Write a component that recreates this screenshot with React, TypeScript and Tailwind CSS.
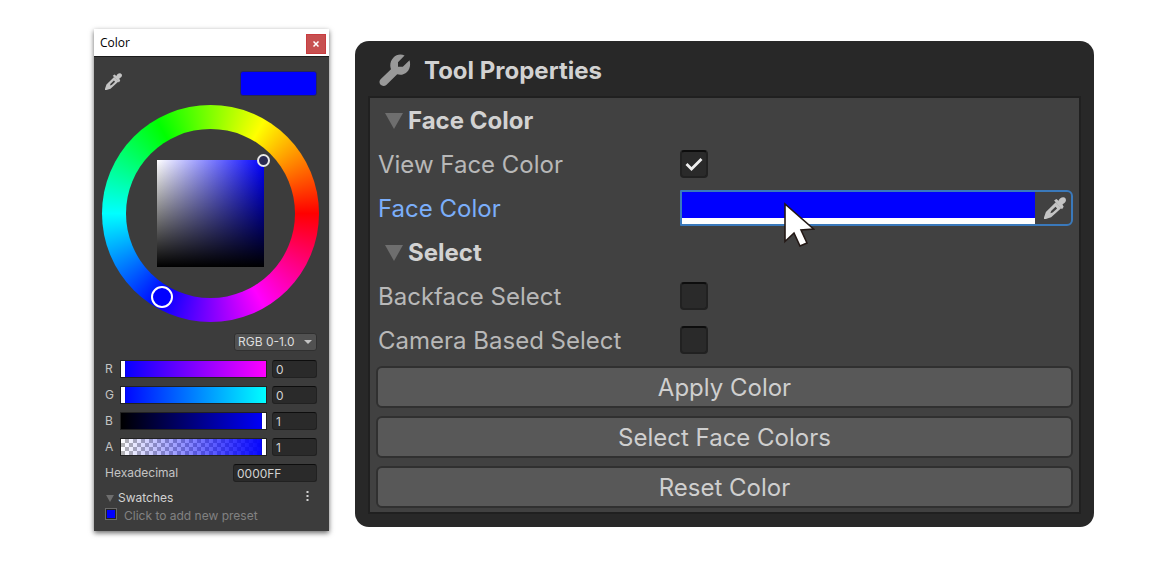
import { useState } from "react";

type IconProps = { className?: string };

function Pipette({ className }: IconProps) {
  return (
    <svg viewBox="0 0 21 21" className={className} fill="currentColor" aria-hidden="true">
      <path d="M9.6 3.4 11.8 2l2.2 1.6C14.6 1.600 16.300.2 18.400.2c1.800 0 2.800 1.500 2.500 3.300-.3 1.700-2.300 2.500-3.300 3.700l1.200 2.200-1.600 2.200z" />
      <path
        fillRule="evenodd"
        d="M11.200 5 1.800 14.200 0 19.500V21h1.800l5-1.600 9.800-9zM11 9.400l1.500 1.500L8.300 14.900l-2.200.6.7-2.100z"
      />
    </svg>
  );
}

function Wrench({ className }: IconProps) {
  return (
    <svg viewBox="0 0 32 32" className={className} fill="currentColor" aria-hidden="true">
      <path d="M25.600 1.600 19 8.200v4.600h4.800l6.700-6.600c1.400 4.600.3 9-2.500 11.800-2.800 2.700-6.500 3.400-9.800 2.300L7.300 30.900c-1.500 1.400-4.200 1.400-5.700-.1s-1.500-4 0-5.500L12 15.200C10.500 11.200 11.300 6.700 14.300 3.700 17.300.7 21.600-.4 25.600 1.600z" />
    </svg>
  );
}

function Triangle({ className }: IconProps) {
  return (
    <svg viewBox="0 0 18 16" className={className} fill="#6e6e6e" aria-hidden="true">
      <path d="M0 0h18L9 16z" />
    </svg>
  );
}

const channels = [
  { name: "R", value: 0, track: "bg-[linear-gradient(90deg,#00f,#f0f)]" },
  { name: "G", value: 0, track: "bg-[linear-gradient(90deg,#00f,#0ff)]" },
  { name: "B", value: 1, track: "bg-[linear-gradient(90deg,#000,#00f)]" },
  {
    name: "A",
    value: 1,
    track:
      "bg-[linear-gradient(90deg,transparent,#00f),repeating-conic-gradient(#b4b4b4_0_25%,#fff_0_50%)] bg-[length:100%_100%,8px_8px]",
  },
];

const field =
  "h-[18px] rounded-[3px] border border-[#212121] border-t-[#0d0d0d] bg-[#2a2a2a] px-[3px] text-xs text-[#d2d2d2] outline-none";

function Channel({ name, value, track }: (typeof channels)[number]) {
  const [current, setCurrent] = useState(String(value));
  return (
    <div className="flex h-[26px] items-center">
      <label htmlFor={"channel-" + name} className="w-[15px] shrink-0">
        {name}
      </label>
      <input
        id={"channel-" + name}
        type="range"
        min={0}
        max={1}
        step={0.01}
        value={Number(current) || 0}
        onChange={(e) => setCurrent(e.target.value)}
        className={
          "h-[18px] w-0 min-w-0 flex-1 appearance-none border border-[#222] [&::-webkit-slider-thumb]:h-4 [&::-webkit-slider-thumb]:w-1 [&::-webkit-slider-thumb]:appearance-none [&::-webkit-slider-thumb]:bg-white [&::-webkit-slider-thumb]:shadow-[0_0_1px_#000] " +
          track
        }
      />
      <input
        aria-label={name + " value"}
        value={current}
        onChange={(e) => setCurrent(e.target.value)}
        className={"ml-[5px] w-[45px] " + field}
      />
    </div>
  );
}

function ColorWindow() {
  return (
    <section className="mt-[29px] w-[235px] shrink-0 bg-[#3c3c3c] text-xs text-[#c4c4c4] shadow-[0_2px_5px_rgba(0,0,0,0.6)]">
      <header className="flex h-7 items-center justify-between border-b border-[#1c1c1c] bg-white pr-[3px] pl-1.5">
        <h2 className="font-['Open_Sans',sans-serif] text-xs text-black">Color</h2>
        <button
          aria-label="Close"
          className="mt-0.5 grid h-5 w-5 place-items-center border border-[#c93c40] bg-[#c75050] text-white"
        >
          <svg viewBox="0 0 6 6" className="h-1.5 w-1.5" stroke="currentColor" strokeWidth="1.5" aria-hidden="true">
            <path d="M.5.5l5 5M5.5.5l-5 5" />
          </svg>
        </button>
      </header>

      <div className="pt-3.5 pr-3 pb-[7px] pl-[11px]">
        <div className="flex h-[25px] items-center justify-between">
          <button aria-label="Pick a color from the screen" className="pb-1 text-[#c4c4c4]">
            <Pipette className="h-[17px] w-[17px]" />
          </button>
          <button aria-label="Current color" className="h-[25px] w-[77px] rounded-[3px] border border-[#26265a] bg-[#00f]" />
        </div>

        <div className="relative mt-[9px] -ml-[3px] grid h-[217px] w-[217px] place-items-center rounded-full bg-[conic-gradient(from_90deg,#f00,#f0f,#00f,#0ff,#0f0,#ff0,#f00)]">
          <div className="grid h-[169px] w-[169px] place-items-center rounded-full bg-[#3c3c3c]">
            <div className="relative h-[107px] w-[107px] bg-[linear-gradient(0deg,#000,transparent),linear-gradient(90deg,#fff,#00f)]">
              <span className="absolute -top-1.5 -right-1.5 h-[13px] w-[13px] rounded-full border-2 border-[#e8e8e8] bg-[#2b2b52]" />
            </div>
          </div>
          <span className="absolute bottom-[14px] left-[49px] h-[22px] w-[22px] rounded-full border-2 border-white bg-[#00f]" />
        </div>

        <div className="mt-[11px] mb-[5px] flex justify-end">
          <div className="relative">
            <select
              aria-label="Color mode"
              className="h-[18px] w-[83px] appearance-none rounded-[3px] border border-[#303030] bg-[#515151] pl-[3px] text-xs leading-4 text-[#dedede] outline-none"
            >
              <option>RGB 0-1.0</option>
              <option>RGB 0-255</option>
              <option>HSV</option>
            </select>
            <svg viewBox="0 0 8 4" className="pointer-events-none absolute top-[7px] right-[5px] h-1 w-2" fill="#c4c4c4" aria-hidden="true">
              <path d="M0 0h8L4 4z" />
            </svg>
          </div>
        </div>

        {channels.map((c) => (
          <Channel key={c.name} {...c} />
        ))}

        <div className="flex h-[26px] items-center justify-between">
          <label htmlFor="hex">Hexadecimal</label>
          <input id="hex" defaultValue="0000FF" className={"w-[84px] " + field} />
        </div>

        <div className="mt-0.5 flex h-5 items-center justify-between">
          <button className="flex items-center gap-1 text-[#d2d2d2]">
            <Triangle className="ml-px h-[7px] w-2" />
            Swatches
          </button>
          <button aria-label="Swatch options" className="mr-2">
            <svg viewBox="0 0 3 12" className="mb-1 h-3 w-[3px]" fill="#d2d2d2" aria-hidden="true">
              <path d="M.5 1h2v2h-2zM.5 5h2v2h-2zM.5 9h2v2h-2z" />
            </svg>
          </button>
        </div>
        <button className="flex h-4 items-center gap-[7px] text-[#828282]">
          <span className="mb-1 grid h-3 w-3 place-items-center border border-[#6a6a6a] bg-[#222]">
            <span className="h-2 w-2 bg-[#00f]" />
          </span>
          Click to add new preset
        </button>
      </div>
    </section>
  );
}

function Foldout({ children }: { children: string }) {
  return (
    <h3 className="flex h-11 items-center pt-0.5">
      <button className="flex items-center gap-[5px] pl-[7px] font-bold text-[#d2d2d2]">
        <Triangle className="h-4 w-[18px]" />
        {children}
      </button>
    </h3>
  );
}

function Toggle({ id, label, checked = false }: { id: string; label: string; checked?: boolean }) {
  return (
    <div className="flex h-11 items-center">
      <label htmlFor={id} className="w-[302px] shrink-0 pt-0.5">
        {label}
      </label>
      <span className="relative grid place-items-center">
        <input
          id={id}
          type="checkbox"
          defaultChecked={checked}
          className="peer h-7 w-7 appearance-none rounded border-2 border-[#212121] border-t-[#0d0d0d] bg-[#2a2a2a]"
        />
        <svg
          viewBox="0 0 28 28"
          className="pointer-events-none absolute h-7 w-7 opacity-0 peer-checked:opacity-100"
          fill="none"
          stroke="#eee"
          strokeWidth="2.8"
          aria-hidden="true"
        >
          <path d="M6.5 14l5 5L21.500 9" />
        </svg>
      </span>
    </div>
  );
}

function ToolProperties() {
  return (
    <section className="mt-[41px] min-w-0 flex-1 rounded-[14px] bg-[#282828] px-[13px] pb-[13px] text-2xl text-[#b8b8b8]">
      <header className="flex h-[55px] items-center gap-[13px] pt-1 pl-[11px]">
        <Wrench className="mb-0.5 h-8 w-8 text-[#999]" />
        <h2 className="font-bold text-[#d2d2d2]">Tool Properties</h2>
      </header>
      <div className="border-2 border-[#202020] bg-[#414141] pr-1.5 pb-1 pl-2">
        <Foldout>Face Color</Foldout>
        <Toggle id="view-face" label="View Face Color" checked />
        <div className="flex h-11 items-center">
          <label htmlFor="face-color" className="w-[302px] shrink-0 pt-0.5 text-[#7baefa]">
            Face Color
          </label>
          <div className="relative flex h-9 flex-1 rounded-l-[1px] rounded-r-md border-2 border-[#3a79bb]">
            <button id="face-color" className="h-full flex-1 border-b-[6px] border-white bg-[#00f]" />
            <button aria-label="Pick face color" className="grid w-9 place-items-center pl-1 text-[#c4c4c4]">
              <Pipette className="h-[22px] w-[22px]" />
            </button>
            <svg viewBox="0 0 32 46" className="pointer-events-none absolute top-[10px] left-[101px] h-[46px] w-8" aria-hidden="true">
              <path d="M2 2v37.5l9-8.5 6 13 7-3-6-13 12.500-1z" fill="#fff" stroke="#231815" strokeWidth="1.6" />
            </svg>
          </div>
        </div>
        <Foldout>Select</Foldout>
        <Toggle id="backface" label="Backface Select" />
        <Toggle id="camera" label="Camera Based Select" />
        <div className="-ml-0.5 flex flex-col gap-2 pt-1">
          {["Apply Color", "Select Face Colors", "Reset Color"].map((t) => (
            <button key={t} className="h-[42px] rounded-md border-2 border-[#303030] bg-[#585858] pt-0.5 text-[#cfcfcf]">
              {t}
            </button>
          ))}
        </div>
      </div>
    </section>
  );
}

export default function App() {
  return (
    <main className="flex min-h-screen items-start gap-[26px] bg-white pr-[81px] pb-8 pl-[94px] font-['Inter',sans-serif]">
      <ColorWindow />
      <ToolProperties />
    </main>
  );
}
